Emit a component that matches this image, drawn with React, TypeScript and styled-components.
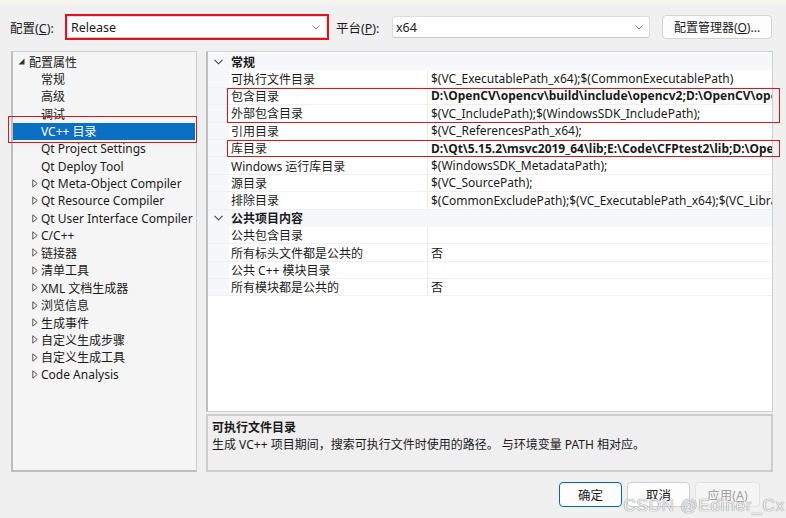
import React from "react";
import styled, { createGlobalStyle } from "styled-components";

const GlobalStyle = createGlobalStyle`
  body {
    margin: 0;
    background: #f0f0f0;
  }
`;

const ROW_H = 17.4;
const FONT = `"Noto Sans", "Noto Sans CJK SC", sans-serif`;

const Window = styled.div`
  position: relative;
  width: 786px;
  height: 518px;
  overflow: hidden;
  background: #f0f0f0;
  font-family: ${FONT};
  font-size: 12px;
  color: #1a1a1a;
  display: flex;
  flex-direction: column;
`;

const TopStrip = styled.div`
  height: 4px;
  background: #f4f5ec;
`;

const ConfigRow = styled.div`
  display: flex;
  align-items: center;
  height: 24px;
  margin-top: 11px;
  padding-left: 10px;
`;

const Label = styled.span<{ $width: number }>`
  width: ${(p) => p.$width}px;
  font-size: 12.5px;
`;

const RedFrame = styled.div`
  outline: 2px solid #e0141c;
  outline-offset: 0;
`;

const Select = styled.div<{ $width: number }>`
  display: flex;
  align-items: center;
  justify-content: space-between;
  width: ${(p) => p.$width}px;
  height: 22px;
  box-sizing: border-box;
  padding: 0 6px 0 3px;
  background: #ffffff;
  border: 1px solid #dcdcdc;
  border-bottom-color: #c4c4c4;
  border-radius: 3px;
  font-size: 12.5px;
`;

const ManagerButton = styled.button`
  margin-left: 12px;
  width: 110px;
  height: 24px;
  background: #fdfdfd;
  border: 1px solid #d3d3d3;
  border-radius: 4px;
  font-family: ${FONT};
  font-size: 12px;
  color: #1a1a1a;
  padding: 0;
`;

const Main = styled.div`
  display: flex;
  gap: 9px;
  margin-top: 12px;
  padding-left: 11px;
  height: 421px;
`;

const TreePanel = styled.div`
  width: 186px;
  box-sizing: border-box;
  background: #f5f5f5;
  border: 1px solid #cfcfcf;
  border-left: 2px solid #bdbdbd;
  border-bottom: 2px solid #bdbdbd;
  padding-top: 1px;
`;

const TreeRow = styled.div<{ $indent: number; $selected?: boolean }>`
  position: relative;
  display: flex;
  align-items: center;
  height: ${ROW_H}px;
  padding-left: ${(p) => p.$indent}px;
  margin-right: 1px;
  background: ${(p) => (p.$selected ? "#0b6fc3" : "transparent")};
  color: ${(p) => (p.$selected ? "#ffffff" : "#1a1a1a")};
  white-space: nowrap;

  ${(p) =>
    p.$selected &&
    `&::after {
      content: "";
      position: absolute;
      top: -7px;
      bottom: -3px;
      left: -5px;
      right: -2px;
      border: 1.5px solid #e0141c;
    }`}
`;

const Expander = styled.span<{ $left: number }>`
  position: absolute;
  left: ${(p) => p.$left}px;
  top: 0;
  height: 100%;
  display: flex;
  align-items: center;
`;

const RightColumn = styled.div`
  width: 567px;
  display: flex;
  flex-direction: column;
  gap: 2px;
`;

const Grid = styled.div`
  height: 361px;
  box-sizing: border-box;
  background: #ffffff;
  border: 1px solid #cfcfcf;
  border-left: 2px solid #bdbdbd;
  padding-top: 1px;
`;

const CategoryRow = styled.div`
  display: flex;
  align-items: center;
  height: ${ROW_H}px;
  background: #f5f7fa;
  font-weight: 700;
`;

const Gutter = styled.div`
  width: 21px;
  height: 100%;
  flex-shrink: 0;
  display: flex;
  align-items: center;
  justify-content: center;
  background: #f5f7fa;
`;

const PropRow = styled.div`
  display: flex;
  height: ${ROW_H}px;
  box-sizing: border-box;
  border-bottom: 1px solid #f0f0f0;
`;

const NameCell = styled.div`
  width: 199px;
  flex-shrink: 0;
  display: flex;
  align-items: center;
  padding-left: 2px;
  box-sizing: border-box;
  border-right: 1px solid #ececec;
  white-space: nowrap;
`;

const ValueCell = styled.div<{ $bold?: boolean }>`
  flex: 1;
  display: flex;
  align-items: center;
  padding-left: 3px;
  overflow: hidden;
  white-space: nowrap;
  font-weight: ${(p) => (p.$bold ? 700 : 400)};
`;

const HighlightGroup = styled.div`
  position: relative;

  &::after {
    content: "";
    position: absolute;
    top: 0;
    bottom: 0;
    left: 19px;
    right: -8px;
    border: 1.5px solid #e0141c;
    pointer-events: none;
  }
`;

const Description = styled.div`
  height: 58px;
  box-sizing: border-box;
  background: #efefef;
  border: 2px solid #cdcdcd;
  padding: 3px 4px 2px;
  line-height: 17px;
`;

const DescTitle = styled.div`
  font-weight: 700;
`;

const Footer = styled.div`
  display: flex;
  justify-content: flex-end;
  gap: 5px;
  margin-top: 10px;
  padding-right: 26px;
`;

const DialogButton = styled.button<{ $primary?: boolean; $disabled?: boolean }>`
  width: ${(p) => (p.$disabled ? 65 : 63)}px;
  height: 25px;
  padding: 0;
  border-radius: 4px;
  font-family: ${FONT};
  font-size: 12.5px;
  background: ${(p) => (p.$disabled ? "#f5f5f5" : "#fdfdfd")};
  color: ${(p) => (p.$disabled ? "#a3a3a3" : "#1a1a1a")};
  border: ${(p) => (p.$primary ? "1.5px solid #0067c0" : p.$disabled ? "1px solid #e3e3e3" : "1px solid #d0d0d0")};
`;

const Watermark = styled.div`
  position: absolute;
  right: 1px;
  bottom: 2px;
  font-family: "Liberation Sans", sans-serif;
  font-size: 17px;
  color: rgba(255, 255, 255, 0.85);
  text-shadow: 0 0 1px #8c8c8c, 0 0 1px #8c8c8c;
  letter-spacing: 0.8px;
`;

const RootArrow = () => (
  <svg width="7" height="7" viewBox="0 0 7 7">
    <polygon points="6.5,0.5 6.5,6.5 0.5,6.5" fill="#333" />
  </svg>
);

const ClosedArrow = () => (
  <svg width="6" height="9" viewBox="0 0 6 9">
    <polygon points="0.8,0.8 5.2,4.5 0.8,8.2" fill="none" stroke="#555" strokeWidth="1" />
  </svg>
);

const Chevron = () => (
  <svg width="9" height="6" viewBox="0 0 9 6">
    <polyline points="0.5,0.8 4.5,4.8 8.5,0.8" fill="none" stroke="#444" strokeWidth="1.1" />
  </svg>
);

const SmallChevron = () => (
  <svg width="8" height="5" viewBox="0 0 8 5">
    <polyline points="0.5,0.5 4,4 7.5,0.5" fill="none" stroke="#888" strokeWidth="1" />
  </svg>
);

type TreeItem = { label: string; expandable?: boolean; selected?: boolean };

const treeItems: TreeItem[] = [
  { label: "常规" },
  { label: "高级" },
  { label: "调试" },
  { label: "VC++ 目录", selected: true },
  { label: "Qt Project Settings" },
  { label: "Qt Deploy Tool" },
  { label: "Qt Meta-Object Compiler", expandable: true },
  { label: "Qt Resource Compiler", expandable: true },
  { label: "Qt User Interface Compiler", expandable: true },
  { label: "C/C++", expandable: true },
  { label: "链接器", expandable: true },
  { label: "清单工具", expandable: true },
  { label: "XML 文档生成器", expandable: true },
  { label: "浏览信息", expandable: true },
  { label: "生成事件", expandable: true },
  { label: "自定义生成步骤", expandable: true },
  { label: "自定义生成工具", expandable: true },
  { label: "Code Analysis", expandable: true },
];

type Prop = { name: string; value: string; bold?: boolean };

const Property = ({ name, value, bold }: Prop) => (
  <PropRow>
    <Gutter />
    <NameCell>{name}</NameCell>
    <ValueCell $bold={bold}>{value}</ValueCell>
  </PropRow>
);

export default function App() {
  return (
    <Window>
      <GlobalStyle />
      <TopStrip />

      <ConfigRow>
        <Label $width={57}>
          配置(<u>C</u>):
        </Label>
        <RedFrame>
          <Select $width={260}>
            <span>Release</span>
            <SmallChevron />
          </Select>
        </RedFrame>
        <Label $width={56} style={{ marginLeft: 9 }}>
          平台(<u>P</u>):
        </Label>
        <Select $width={258}>
          <span>x64</span>
          <SmallChevron />
        </Select>
        <ManagerButton>
          配置管理器(<u>O</u>)...
        </ManagerButton>
      </ConfigRow>

      <Main>
        <TreePanel>
          <TreeRow $indent={16}>
            <Expander $left={5}>
              <RootArrow />
            </Expander>
            配置属性
          </TreeRow>
          {treeItems.map((item) => (
            <TreeRow key={item.label} $indent={28} $selected={item.selected}>
              {item.expandable && (
                <Expander $left={19}>
                  <ClosedArrow />
                </Expander>
              )}
              {item.label}
            </TreeRow>
          ))}
        </TreePanel>

        <RightColumn>
          <Grid>
            <CategoryRow>
              <Gutter>
                <Chevron />
              </Gutter>
              <span style={{ paddingLeft: 2 }}>常规</span>
            </CategoryRow>
            <Property name="可执行文件目录" value="$(VC_ExecutablePath_x64);$(CommonExecutablePath)" />
            <HighlightGroup>
              <Property
                name="包含目录"
                bold
                value={"D:\\OpenCV\\opencv\\build\\include\\opencv2;D:\\OpenCV\\opencv\\build\\include;$(IncludePath)"}
              />
              <Property name="外部包含目录" value="$(VC_IncludePath);$(WindowsSDK_IncludePath);" />
            </HighlightGroup>
            <Property name="引用目录" value="$(VC_ReferencesPath_x64);" />
            <HighlightGroup>
              <Property
                name="库目录"
                bold
                value={"D:\\Qt\\5.15.2\\msvc2019_64\\lib;E:\\Code\\CFPtest2\\lib;D:\\OpenCV\\opencv\\build\\x64\\vc15\\lib"}
              />
            </HighlightGroup>
            <Property name="Windows 运行库目录" value="$(WindowsSDK_MetadataPath);" />
            <Property name="源目录" value="$(VC_SourcePath);" />
            <Property name="排除目录" value="$(CommonExcludePath);$(VC_ExecutablePath_x64);$(VC_LibraryPath_x64)" />
            <CategoryRow>
              <Gutter>
                <Chevron />
              </Gutter>
              <span style={{ paddingLeft: 2 }}>公共项目内容</span>
            </CategoryRow>
            <Property name="公共包含目录" value="" />
            <Property name="所有标头文件都是公共的" value="否" />
            <Property name="公共 C++ 模块目录" value="" />
            <Property name="所有模块都是公共的" value="否" />
          </Grid>

          <Description>
            <DescTitle>可执行文件目录</DescTitle>
            <div>生成 VC++ 项目期间，搜索可执行文件时使用的路径。 与环境变量 PATH 相对应。</div>
          </Description>
        </RightColumn>
      </Main>

      <Footer>
        <DialogButton $primary>确定</DialogButton>
        <DialogButton>取消</DialogButton>
        <DialogButton $disabled>
          应用(<u>A</u>)
        </DialogButton>
      </Footer>

      <Watermark>CSDN @Ediner_Cx</Watermark>
    </Window>
  );
}
